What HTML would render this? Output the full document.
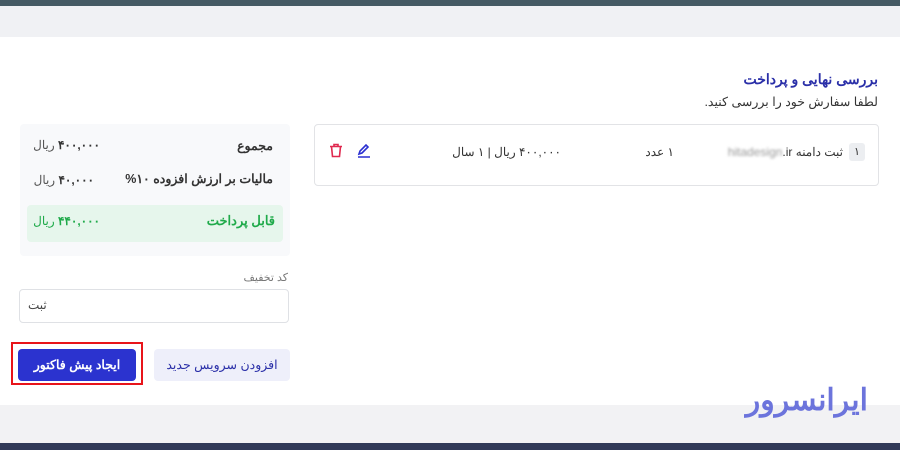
<!DOCTYPE html>
<html><head><meta charset="utf-8"><style>
*{margin:0;padding:0;box-sizing:border-box}
body{width:900px;height:450px;position:relative;overflow:hidden;background:#fff;font-family:"Liberation Sans","Noto Sans CJK SC",sans-serif;color:#333}
.a{position:absolute}
.r{direction:rtl;white-space:nowrap}
</style></head><body>
<div class="a" style="left:0;top:0;width:900px;height:6px;background:#455a64"></div>
<div class="a" style="left:0;top:6px;width:900px;height:31px;background:#f0f1f4"></div>
<div class="a" style="left:0;top:405px;width:900px;height:38px;background:#f2f2f4"></div>
<div class="a" style="left:0;top:443px;width:900px;height:7px;background:#323a58"></div>

<div class="a r" style="right:22px;top:71px;font-size:14px;font-weight:bold;color:#2a2fa8">بررسی نهایی و پرداخت</div>
<div class="a r" style="right:22px;top:94px;font-size:12.5px;color:#333">لطفا سفارش خود را بررسی کنید.</div>

<div class="a" style="left:314px;top:124px;width:565px;height:62px;border:1px solid #e2e3e6;border-radius:4px"></div>
<div class="a" style="left:849px;top:143px;width:16px;height:18px;background:#eceef1;border-radius:3px;font-size:11px;text-align:center;line-height:18px">۱</div>
<div class="a r" style="right:57px;top:145px;font-size:12px">ثبت دامنه <span style="color:#999;filter:blur(1.2px)">hitadesign</span>.ir</div>
<div class="a r" style="right:226px;top:145px;font-size:12px">۱ عدد</div>
<div class="a r" style="right:339px;top:145px;font-size:12px">۴۰۰,۰۰۰ ریال | ۱ سال</div>
<svg class="a" style="left:329px;top:143px" width="14" height="15" viewBox="0 0 14 15" fill="none" stroke="#e0294f" stroke-width="1.6"><path d="M1 3.5h12M5 3.5V1.5h4v2M2.5 3.5l1 10h7l1-10"/></svg>
<svg class="a" style="left:357px;top:143px" width="14" height="15" viewBox="0 0 14 15" fill="none" stroke="#2a2fd0" stroke-width="1.6"><path d="M2 11l1-3 6-6 2 2-6 6-3 1zM1 14h12"/></svg>

<div class="a" style="left:20px;top:124px;width:270px;height:132px;background:#f8f9fb;border-radius:4px"></div>
<div class="a r" style="right:627px;top:138px;font-size:12.5px;font-weight:bold;color:#333">مجموع</div>
<div class="a r" style="right:800px;top:138px;font-size:12px;color:#555"><b style="color:#333">۴۰۰,۰۰۰</b> ریال</div>
<div class="a r" style="right:627px;top:171px;font-size:12.5px;font-weight:bold;color:#333">مالیات بر ارزش افزوده ۱۰%</div>
<div class="a r" style="right:806px;top:173px;font-size:12px;color:#555"><b style="color:#333">۴۰,۰۰۰</b> ریال</div>
<div class="a" style="left:27px;top:205px;width:256px;height:37px;background:#e6f6ec;border-radius:4px"></div>
<div class="a r" style="right:625px;top:213px;font-size:13px;font-weight:bold;color:#1faa4a">قابل پرداخت</div>
<div class="a r" style="right:800px;top:214px;font-size:12px;color:#1faa4a"><b>۴۴۰,۰۰۰</b> ریال</div>

<div class="a r" style="right:612px;top:271px;font-size:11px;color:#777">کد تخفیف</div>
<div class="a" style="left:19px;top:289px;width:270px;height:34px;border:1px solid #dfe1e5;border-radius:4px"></div>
<div class="a r" style="left:28px;top:298px;font-size:12px;color:#444">ثبت</div>

<div class="a" style="left:154px;top:349px;width:136px;height:32px;background:#eeeffa;border-radius:4px;font-size:12.5px;color:#2a2fa8;text-align:center;line-height:32px;direction:rtl">افزودن سرویس جدید</div>
<div class="a" style="left:11px;top:342px;width:132px;height:43px;border:2px solid #e8141a"></div>
<div class="a" style="left:18px;top:349px;width:118px;height:32px;background:#2b33cf;border-radius:4px;font-size:12.5px;font-weight:bold;color:#fff;text-align:center;line-height:32px;direction:rtl">ایجاد پیش فاکتور</div>

<div class="a r" style="right:32px;top:383px;font-size:30px;font-weight:900;color:#6c74dc;letter-spacing:-1px">ایرانسرور</div>
</body></html>
